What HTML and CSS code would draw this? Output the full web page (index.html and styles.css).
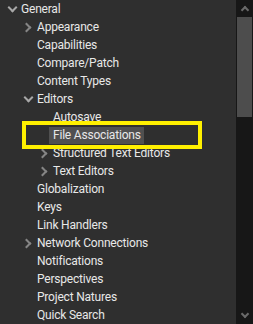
FILE: index.html
```html
<!DOCTYPE html>
<html>
  <head>
    <title>Preferences Tree</title>
    <link rel="stylesheet" href="styles.css">
  </head>
  <body>
    <div class="panel">
      <ul class="tree">
        <li class="row open lvl0"><span class="twisty"></span><span class="label">General</span></li>
        <li class="row closed lvl1"><span class="twisty"></span><span class="label">Appearance</span></li>
        <li class="row lvl1"><span class="twisty"></span><span class="label">Capabilities</span></li>
        <li class="row lvl1"><span class="twisty"></span><span class="label">Compare/Patch</span></li>
        <li class="row lvl1"><span class="twisty"></span><span class="label">Content Types</span></li>
        <li class="row open lvl1"><span class="twisty"></span><span class="label">Editors</span></li>
        <li class="row lvl2"><span class="twisty"></span><span class="label">Autosave</span></li>
        <li class="row lvl2 selected"><span class="twisty"></span><span class="label">File Associations</span></li>
        <li class="row closed lvl2"><span class="twisty"></span><span class="label">Structured Text Editors</span></li>
        <li class="row closed lvl2"><span class="twisty"></span><span class="label">Text Editors</span></li>
        <li class="row lvl1"><span class="twisty"></span><span class="label">Globalization</span></li>
        <li class="row lvl1"><span class="twisty"></span><span class="label">Keys</span></li>
        <li class="row lvl1"><span class="twisty"></span><span class="label">Link Handlers</span></li>
        <li class="row closed lvl1"><span class="twisty"></span><span class="label">Network Connections</span></li>
        <li class="row lvl1"><span class="twisty"></span><span class="label">Notifications</span></li>
        <li class="row lvl1"><span class="twisty"></span><span class="label">Perspectives</span></li>
        <li class="row lvl1"><span class="twisty"></span><span class="label">Project Natures</span></li>
        <li class="row lvl1"><span class="twisty"></span><span class="label">Quick Search</span></li>
      </ul>
      <div class="mark"></div>
    </div>
    <div class="scrollbar">
      <div class="arrow up"></div>
      <div class="track"><div class="thumb"></div></div>
      <div class="arrow down"></div>
    </div>
  </body>
</html>
```

FILE: styles.css
```css
* {
  box-sizing: border-box;
}
body {
  margin: 0;
  padding: 0;
  width: 253px;
  height: 324px;
  display: flex;
  background-color: #2f2f2f;
  font-family: Roboto, "Liberation Sans", sans-serif;
  font-size: 12px;
  letter-spacing: -0.2px;
  color: #e8e8e8;
  overflow: hidden;
}
.panel {
  position: relative;
  flex: 1;
  overflow: hidden;
}
.tree {
  list-style: none;
  margin: 0;
  padding: 0;
}
.row {
  display: flex;
  align-items: center;
  height: 18px;
  white-space: nowrap;
}
.lvl0 { padding-left: 4px; }
.lvl1 { padding-left: 20px; }
.lvl2 { padding-left: 36px; }
.twisty {
  width: 17px;
  height: 18px;
  flex: none;
  position: relative;
}
.closed .twisty::before,
.open .twisty::before {
  content: "";
  position: absolute;
  width: 5px;
  height: 5px;
  border-right: 2px solid #858585;
  border-bottom: 2px solid #858585;
}
.closed .twisty::before {
  left: 3px;
  top: 6px;
  transform: rotate(-45deg);
}
.open .twisty::before {
  left: 5px;
  top: 4px;
  border-color: #a8a8a8;
  transform: rotate(45deg);
}
.label {
  line-height: 17px;
}
.selected .label {
  background-color: #505050;
  margin-left: -4px;
  padding: 0 3px 0 4px;
}
.mark {
  position: absolute;
  left: 22px;
  top: 121px;
  width: 180px;
  height: 28px;
  border: 4px solid #fff000;
}
.scrollbar {
  width: 17px;
  flex: none;
  background-color: #171717;
  display: flex;
  flex-direction: column;
}
.arrow {
  height: 17px;
  position: relative;
}
.arrow::before {
  content: "";
  position: absolute;
  left: 6px;
  width: 4px;
  height: 4px;
  border-left: 2px solid #6a6a6a;
  border-top: 2px solid #6a6a6a;
}
.up::before {
  top: 7px;
  transform: rotate(45deg);
}
.down::before {
  top: 4px;
  transform: rotate(-135deg);
}
.track {
  flex: 1;
}
.thumb {
  margin: 0 1px;
  height: 100px;
  background-color: #4d4d4d;
}
```
